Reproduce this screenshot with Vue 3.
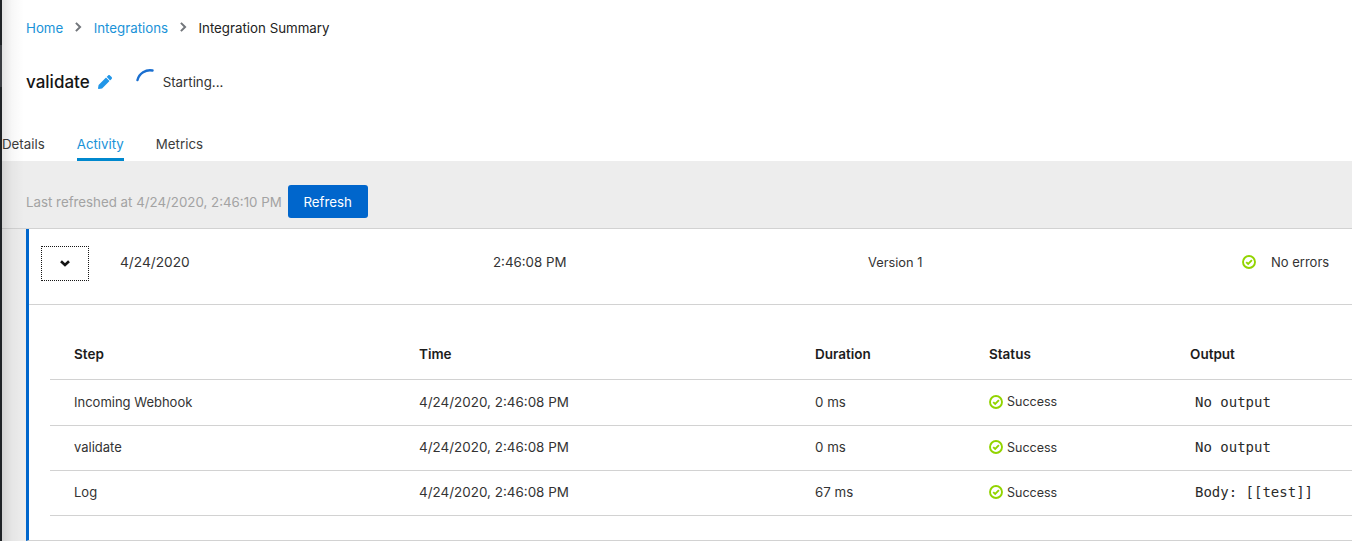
<script setup>
const steps = [
  { name: 'Incoming Webhook', time: '4/24/2020, 2:46:08 PM', duration: '0 ms', output: 'No output' },
  { name: 'validate', time: '4/24/2020, 2:46:08 PM', duration: '0 ms', output: 'No output' },
  { name: 'Log', time: '4/24/2020, 2:46:08 PM', duration: '67 ms', output: 'Body: [[test]]' }
]
</script>

<template>
  <div class="page">
    <aside class="rail"><span class="rail-item"></span></aside>
    <main class="main">
      <nav class="crumbs">
        <a class="link">Home</a>
        <svg class="sep" viewBox="0 0 8 12"><path d="M1.500 1 L6.500 6 L1.500 11" fill="none" stroke="#72767b" stroke-width="2.400"/></svg>
        <a class="link">Integrations</a>
        <svg class="sep" viewBox="0 0 8 12"><path d="M1.500 1 L6.500 6 L1.500 11" fill="none" stroke="#72767b" stroke-width="2.400"/></svg>
        <span>Integration Summary</span>
      </nav>
      <div class="title-row">
        <h1 class="title">validate</h1>
        <svg class="pencil" viewBox="0 0 512 512"><path fill="#2196e8" d="M497.900 142.100 l-46.100 46.100 c-4.700 4.700-12.300 4.700-17 0 l-111-111 c-4.700-4.700-4.700-12.300 0-17 l46.100-46.100 c18.700-18.700 49.100-18.700 67.900 0 l60.100 60.100 c18.800 18.700 18.800 49.100 0 67.900 z M284.200 99.800 21.600 362.400 .4 483.900 c-2.900 16.400 11.400 30.600 27.800 27.800 l121.500-21.300 262.600-262.600 c4.700-4.700 4.700-12.300 0-17 l-111-111 c-4.800-4.700-12.400-4.700-17.100 0 z"/></svg>
        <svg class="spinner" viewBox="0 0 20 20"><path d="M2.500 11 A13 13 0 0 1 17.500 1.500" fill="none" stroke="#1a6fd0" stroke-width="2.400" stroke-linecap="round"/></svg>
        <span class="starting">Starting...</span>
      </div>
      <div class="tabs">
        <span class="tab">Details</span>
        <span class="tab active">Activity</span>
        <span class="tab">Metrics</span>
      </div>
      <section class="panel">
        <div class="toolbar">
          <span class="refreshed">Last refreshed at 4/24/2020, 2:46:10 PM</span>
          <button class="btn">Refresh</button>
        </div>
        <div class="card">
          <div class="summary">
            <div class="toggle">
              <svg class="chev" viewBox="0 0 10 7"><path d="M1 1.200 L5 5 L9 1.200" fill="none" stroke="#151515" stroke-width="2.600"/></svg>
            </div>
            <span class="s-date">4/24/2020</span>
            <span class="s-time">2:46:08 PM</span>
            <span class="s-ver">Version 1</span>
            <span class="s-status">
              <svg class="ok" viewBox="0 0 14 14"><circle cx="7" cy="7" r="6" fill="none" stroke="#92d400" stroke-width="1.900"/><path d="M4.200 7.100 L6.200 9 L9.900 5.200" fill="none" stroke="#92d400" stroke-width="1.900"/></svg>
              <span>No errors</span>
            </span>
          </div>
          <div class="detail">
            <div class="row head">
              <span>Step</span><span>Time</span><span>Duration</span><span>Status</span><span>Output</span>
            </div>
            <div v-for="s in steps" :key="s.name" class="row data">
              <span class="name">{{ s.name }}</span>
              <span class="time">{{ s.time }}</span>
              <span>{{ s.duration }}</span>
              <span class="st">
                <svg class="ok" viewBox="0 0 14 14"><circle cx="7" cy="7" r="6" fill="none" stroke="#92d400" stroke-width="1.900"/><path d="M4.200 7.100 L6.200 9 L9.900 5.200" fill="none" stroke="#92d400" stroke-width="1.900"/></svg>
                Success
              </span>
              <code class="out">{{ s.output }}</code>
            </div>
          </div>
        </div>
      </section>
    </main>
  </div>
</template>

<style>
html, body { margin: 0; padding: 0; background: #fff; overflow: hidden; }
</style>

<style scoped>
.page { display: flex; width: 1352px; height: 541px; overflow: hidden; font-family: "Inter", "Open Sans", sans-serif; font-size: 13.300px; color: #151515; }
.rail { width: 2px; flex: none; background: #1f2326; position: relative; z-index: 2; }
.rail::after { content: ""; position: absolute; left: 2px; top: 0; bottom: 0; width: 22px; background: linear-gradient(to right, rgba(0,0,0,.11), rgba(0,0,0,.03) 45%, rgba(0,0,0,0)); pointer-events: none; }
.rail-item { display: block; height: 42px; margin-top: 45px; background: #3a3d42; }
.main { flex: 1; min-width: 0; display: flex; flex-direction: column; }
.crumbs { display: flex; align-items: center; height: 21px; margin-top: 17px; padding-left: 24px; color: #222; }
.link { color: #1a93d8; }
.sep { width: 8px; height: 10px; margin: -2px 11.200px 0; }
.title-row { display: flex; align-items: center; height: 30px; margin-top: 29px; padding-left: 24px; }
.title { margin: 0; font-size: 17px; font-weight: 500; line-height: 1; }
.pencil { width: 14px; height: 14px; margin-left: 8px; }
.spinner { width: 20px; height: 20px; margin-left: 23px; margin-bottom: 7px; }
.starting { margin-left: 8px; color: #333; }
.tabs { display: flex; gap: 32px; height: 38px; margin-top: 26px; }
.tab { display: flex; align-items: center; height: 38px; box-sizing: border-box; padding-top: 7px; color: #3c3c3c; border-bottom: 3px solid transparent; }
.tab.active { color: #1a93d8; border-bottom-color: #0088ce; }
.panel { flex: 1; background: #ededed; display: flex; flex-direction: column; }
.toolbar { display: flex; align-items: flex-start; height: 68px; padding: 24px 0 0 24px; box-sizing: border-box; border-bottom: 1px solid #d2d2d2; }
.refreshed { color: #a3a3a3; line-height: 35px; }
.btn { margin-left: 6px; width: 80px; height: 33px; padding: 0; border: 0; border-radius: 3px; background: #06c; color: #fff; font: inherit; }
.card { flex: 1; margin-left: 24px; background: #fff; border-left: 3px solid #06c; border-bottom: 1px solid #d2d2d2; }
.summary { display: flex; align-items: center; height: 76px; padding-bottom: 7px; box-sizing: border-box; border-bottom: 1px solid #d2d2d2; color: #333; }
.toggle { width: 46px; height: 33px; margin-left: 12px; border: 1px dotted #151515; border-radius: 1px; display: flex; align-items: center; justify-content: center; flex: none; }
.chev { width: 10px; height: 7px; }
.s-date, .s-time, .s-ver, .s-status { margin-bottom: 2px; }
.s-date { margin-left: 31px; width: 373px; font-size: 13.700px; }
.s-time { width: 375px; }
.s-ver { width: 374px; font-size: 12.800px; }
.s-status { display: flex; align-items: center; font-size: 13px; }
.s-status .ok { margin-right: 15px; }
.ok { width: 14px; height: 14px; flex: none; }
.detail { margin-left: 21px; padding-top: 29px; }
.row { display: grid; grid-template-columns: 345px 396px 174px 201px 1fr; align-items: center; height: 45px; padding-left: 24px; border-bottom: 1px solid #d2d2d2; box-sizing: border-box; color: #333; }
.row.head { height: 46px; padding-bottom: 6px; font-size: 13.500px; font-weight: 600; color: #1c1c1c; }
.row.data { padding-bottom: 2px; }
.row:nth-child(2) { height: 46px; }
.name { font-size: 13px; }
.time { font-size: 13.450px; }
.st { display: flex; align-items: center; gap: 4px; font-size: 12.500px; }
.out { font-family: "DejaVu Sans Mono", monospace; font-size: 14px; padding-left: 5px; color: #2a2a2a; }
</style>
